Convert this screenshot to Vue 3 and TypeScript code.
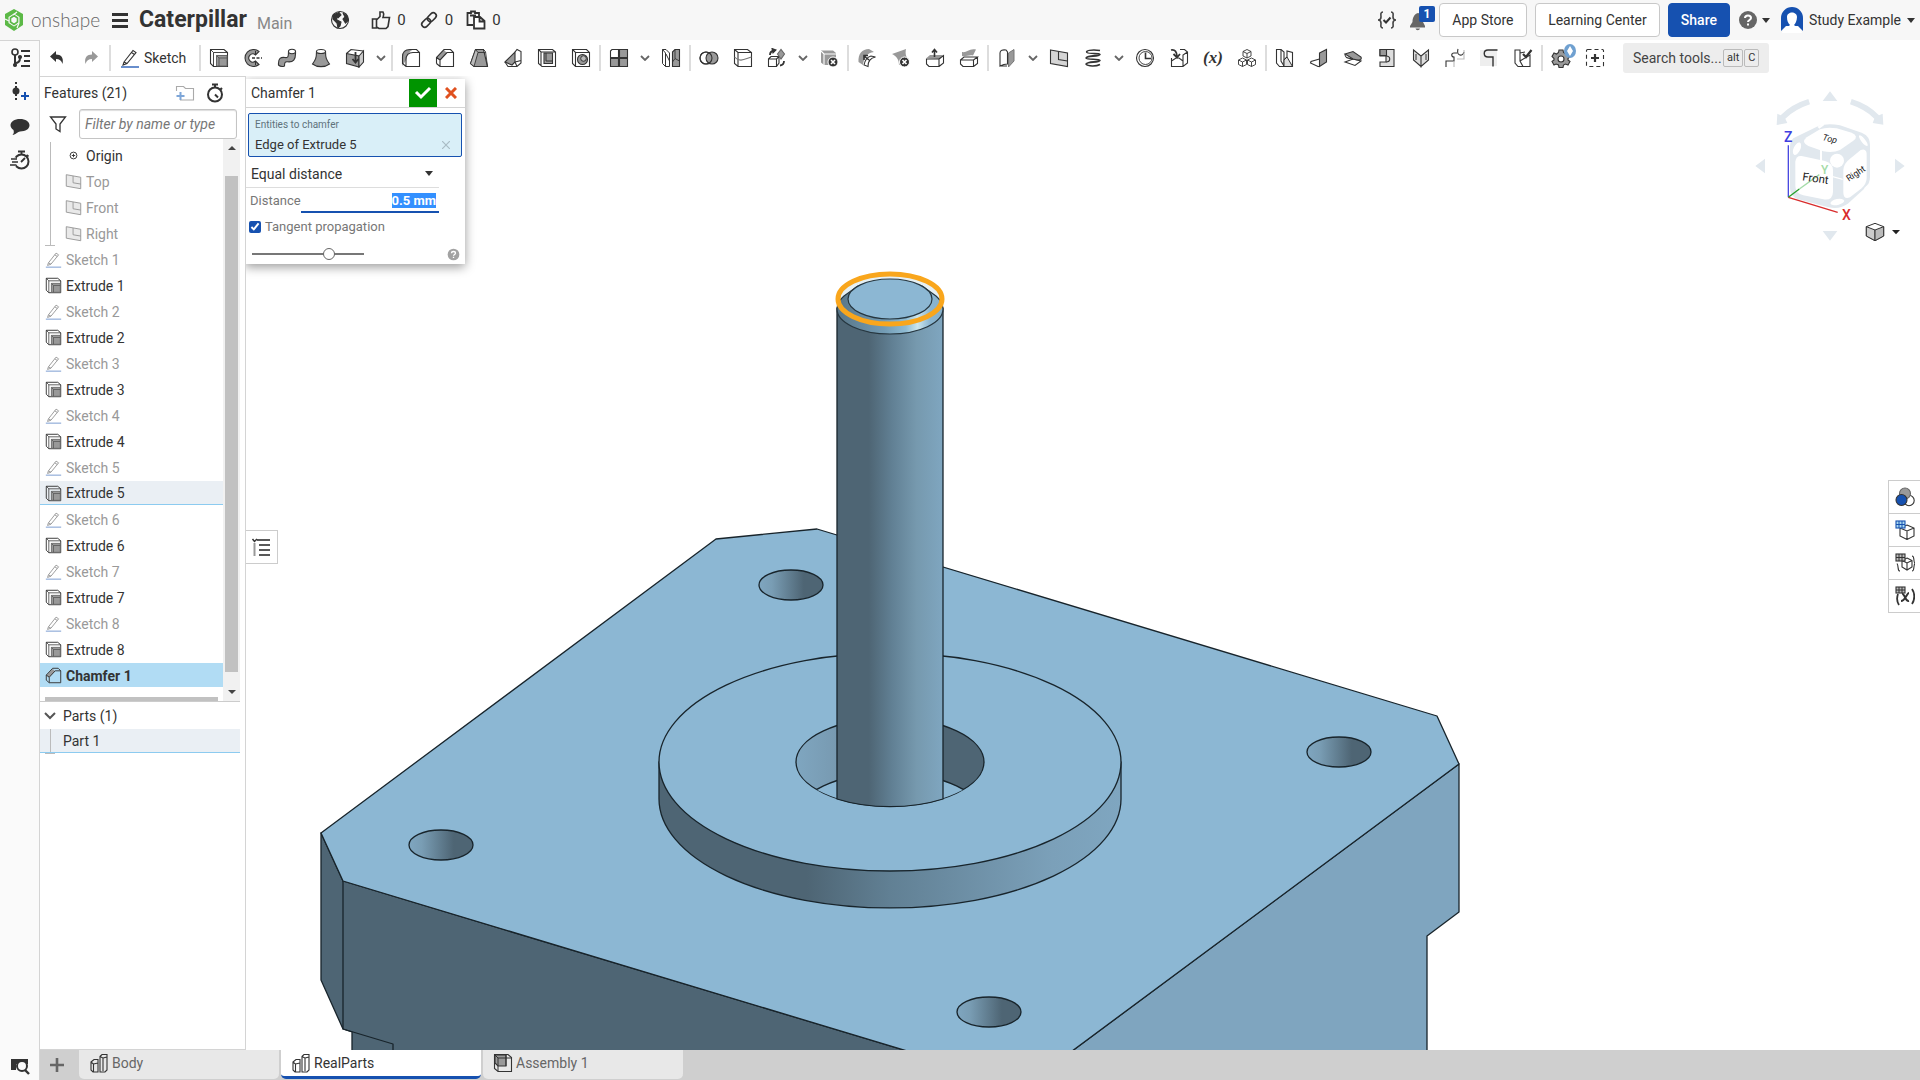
<script setup lang="ts">
import { onMounted, ref } from 'vue'

type ToolItem = { kind: 'icon' | 'chev' | 'sep'; name?: string }

const g = '#999'
const icons: Record<string, string> = {
  undo: '<path d="M3 8.500L9 3V6.500C14 6.500 17 9.500 15.500 16C14.500 12.500 12.500 11 9 11V14Z" fill="#333" stroke="none"/>',
  redo: '<path d="M17 8.500L11 3V6.500C6 6.500 3 9.500 4.500 16C5.500 12.500 7.500 11 11 11V14Z" fill="#999" stroke="none"/>',
  extrude: `<path d="M1.500 1.500H15L18.500 4.500V18.500H4.500L1.500 15.500Z"/><path d="M1.500 1.500L4.500 4.500H18.500M4.500 4.500V18.500" stroke-width=".9"/><path d="M7.500 7.500H18V18H7.500Z" fill="${g}" stroke="#666" stroke-width="1"/><path d="M7.500 7.500L10 10H18M10 10V18" stroke="#555" stroke-width=".9"/>`,
  revolve: `<path d="M16 3.500A8.500 8.500 0 1 0 16 16.500L12.500 13A4 4 0 1 1 12.500 7Z" fill="${g}"/><path d="M9 10H19" stroke-dasharray="3 1.500" stroke-width="1.300"/><path d="M12.500 3V7M12.500 13V17" stroke-width="1"/>`,
  sweep: `<path d="M1.500 17C1 10 4 9 8 9.500C11 10 11.500 9 11.500 3.500H18.500C19 12 16 14.500 10.500 13.800C8 13.500 7.500 14.500 7.500 18Q4 19.500 1.500 17Z" fill="${g}"/><ellipse cx="15" cy="3.500" rx="3.500" ry="2.200" fill="#fff"/>`,
  loft: `<path d="M5.500 3.500C5.500 10 4.500 12 1.500 16C6 19.500 14 19.500 18.500 16C15.500 12 14.500 10 14.500 3.500Z" fill="${g}"/><ellipse cx="10" cy="3.500" rx="4.500" ry="2" fill="#fff"/>`,
  thicken: `<path d="M1.500 5.500L14 8V19L1.500 15.500Z" fill="${g}"/><path d="M14 8L18.500 3V14L14 19Z" fill="#ccc"/><path d="M1.500 5.500L6 1.500L18.500 3"/><path d="M10.500 4V14M7.500 11L10.500 14.500L13.500 11" stroke-width="1.800"/>`,
  fillet: `<path d="M1.500 18V10C1.500 5 4 1.500 9 1.500H12.500C8 3.500 5 7 5 12Z" fill="${g}" stroke="none"/><path d="M1.500 16V9Q1.500 1.500 9 1.500H15.500L18.500 4.500V18.500H5L1.500 15.500M18.500 4.500H12Q5 4.500 5 12V18.500"/>`,
  chamfer: `<path d="M1.500 10L9 2L12 5L5 12Z" fill="${g}" stroke="none"/><path d="M1.500 15.500V9.500L9 1.500H15.500L18.500 4.500V18.500H5L1.500 15.500M18.500 4.500H12L5 12V18.500M1.500 9.500L5 12"/>`,
  draft: `<path d="M6.500 1.500H14.500L18.500 18.500H5L1.500 15.500Z" fill="${g}"/><path d="M6.500 1.500L9 4.500L5 18.500L1.500 15.500Z" fill="#bbb" stroke-width=".9"/><path d="M14.500 1.500L16.500 3.500L18.500 18.500M9 4.500H16.500" stroke-width=".9"/>`,
  rib: `<path d="M2 14L12 4V14L9 17Z" fill="${g}"/><path d="M12 4L14 1.500L18 3.500V15L14 18.500H5L2 14M12 14L18 12.500M14 18.500L12 14"/>`,
  shell: `<path d="M1.500 1.500H15.500L18.500 4V18.500H5L1.500 15.500ZM1.500 1.500L4 4H18.500M4 4V17"/><path d="M7 5H15.500V15.500H7Z" fill="${g}"/><path d="M9 5V13H15.500" stroke-width="1"/>`,
  hole: `<path d="M1.500 1.500H15.500L18.500 4.500V18.500H4.500L1.500 15.500ZM1.500 1.500L4.500 4.500H18.500M4.500 4.500V18.500"/><circle cx="11.500" cy="11.500" r="5" fill="${g}"/><circle cx="12.500" cy="10.500" r="2.800" fill="#bbb" stroke-width="1"/>`,
  pattern: `<path d="M1.500 3L3 1.500H9.500V9.500H1.500Z" fill="#fff"/><path d="M10.500 1.500H18.500V9.500H10.500ZM1.500 10.500H9.500V18.500H1.500ZM10.500 10.500H18.500V18.500H10.500Z" fill="${g}"/>`,
  mirror: `<path d="M1.500 1.500H5L8.500 5V18.500H4.500L1.500 15.500ZM1.500 1.500L4.500 5V18.500M8.500 13L5 6" stroke-width="1"/><path d="M11.500 4L14 1.500H18.500V18.500H11.500Z" fill="${g}"/><path d="M11.500 14L14 10.500V1.500M14 10.500L18.500 13" stroke-width=".9"/>`,
  boolean: `<circle cx="7" cy="10" r="6"/><circle cx="13" cy="10" r="6" fill="${g}"/><circle cx="7" cy="10" r="6"/>`,
  split: '<path d="M1.500 1.500H14.500L18.500 4.500V18.500H5L1.500 15.500ZM1.500 1.500L5 4.500H18.500M5 4.500V18.500"/><path d="M1.500 9C7 15 12 11 18.500 9" stroke="#777"/>',
  transform: `<path d="M1.500 11H9.500V18.500H1.500ZM1.500 11L4 8.500H12L9.500 11M12 8.500V15L9.500 18.500"/><path d="M10.500 6L14 1.500L17.500 6L14 11Z" fill="${g}" stroke="#666"/><path d="M3 7C3 4 4 3 7 2.500M13 17.500C16 17 17 16 17 13" stroke-width="1.800"/><path d="M5 0.500L9 2L6 5Z" fill="#333"/>`,
  deletepart: `<path d="M2 2.500H14L17 5V17H5L2 14.500Z" fill="${g}" stroke="none"/><path d="M2 3L5 6H17M5 6V17" stroke="#fff"/><circle cx="14" cy="14" r="5" fill="#333" stroke="#fff" stroke-width="1"/><path d="M12 12L16 16M16 12L12 16" stroke="#fff" stroke-width="1.600"/>`,
  movefaceA: `<path d="M1.500 14C1 6 5 1 12 1L17 4C10 5 7 9 6 17Z" fill="${g}" stroke="none"/><path d="M11 18.500C11 14 13 10 18.500 9L14 8C10 9 8 12 7 17Z" fill="#fff"/><path d="M12 12L7 8M7 12V7.500H11" stroke-width="1.600"/>`,
  deleteface: `<path d="M1 6L15 1C14 6 15 9 18 13L8 17C8 11 5 8 1 6Z" fill="${g}" stroke="none"/><circle cx="13.500" cy="14" r="5" fill="#333" stroke="#fff" stroke-width="1"/><path d="M11.500 12L15.500 16M15.500 12L11.500 16" stroke="#fff" stroke-width="1.600"/>`,
  moveface: `<path d="M1.500 10L5 7H18L15 11Z" fill="${g}" stroke="none"/><path d="M1.500 11H14V18.500H4L1.500 16ZM14 11L18.500 7.500V15L14 18.500"/><path d="M9.500 9V2M7 4.500L9.500 1.500L12 4.500" stroke-width="1.600"/>`,
  replaceface: `<path d="M3 4C8 5 10 0 17 1.500L14 7.500C10 6.500 7 9 3 8Z" fill="${g}" stroke="none"/><path d="M1.500 12H14.500V18.500H4L1.500 16ZM1.500 12L5 9H18.500L14.500 12M18.500 9V15.500L14.500 18.500"/>`,
  surface: `<path d="M3 18V5C3 2 6 1.500 9 2L10.500 4V16C7 16 5 17 3 18ZM3 18H10"/><path d="M11.500 5L17 1.500V13L11.500 19Z" fill="${g}" stroke="#777" stroke-width="1"/>`,
  plane: '<path d="M1.500 2L18.500 5V18.500L1.500 15.500Z" fill="#d5d5d5"/><path d="M9.500 3.500V11.500L18.500 13"/>',
  helix: '<path d="M17 2.500C8 1 2 3 4 4.500C7 6.500 16 4.500 17 6.500C16 9 4 7.500 3 10C4 12.500 16 10 17 12.500C16 15 4 13.500 3 16C5 18.500 13 18.500 17 16.500M3 10C5 7 15 8 17 6.500M3 16C5 13 15 14.500 17 12.500" stroke-width="1.500"/>',
  clock: '<circle cx="10" cy="10" r="8.500"/><circle cx="10.500" cy="10" r="6.500" stroke-width=".9"/><path d="M10.500 4.500V10.500H16" stroke-width="1.600"/>',
  importp: '<path d="M2.500 10V18.500H14L18.500 15V4L15.500 1.500H11M14 18.500V7L18.500 4M2.500 13L7 10H10L14 13"/><path d="M2 2C6 1 8 4 8 9M4.500 6L8 9.500L11 6" stroke-width="1.800"/>',
  cubes: '<path d="M10 1.500L14 3.500V8L10 10L6 8V3.500ZM6 3.500L10 5.500L14 3.500M10 5.500V10M5.500 10L9.500 12V16.500L5.500 18.500L1.500 16.500V12ZM1.500 12L5.500 14L9.500 12M5.500 14V18.500M14.500 10L18.500 12V16.500L14.500 18.500L10.500 16.500V12ZM10.500 12L14.500 14L18.500 12M14.500 14V18.500" stroke-width=".9"/>',
  sm1: `<path d="M1.500 1.500H6L9 4V18.500H4.500L1.500 15Z"/><path d="M6 1.500V13L9 18M9 12L12 9V3L17.500 4.500V18.500H9"/><path d="M12 9L17.500 18.500L9 18.500V12Z" fill="#ddd" stroke-width="1"/>`,
  sm2: `<path d="M10.500 5L17.500 1.500V14L10.500 18.500Z" fill="${g}"/><path d="M10.500 11L2 13.500L1.500 15L9 18.500H10.500"/>`,
  sm3: `<path d="M2 14L10 11L18 13L12 17.500Z" fill="#fff"/><path d="M2 6L10 3.500L18 9C19 12 17 13 10 11Z" fill="${g}"/><path d="M2 6C2 10 4 10 10 11"/>`,
  sm4: `<path d="M3 1.500H17V18.500H3V14H9V8H3Z" fill="#ddd"/><path d="M3 1.500H9.500V7.500H3Z" fill="${g}"/><path d="M9 8C14 8 14 14 9 14" />`,
  sm5: '<path d="M2.500 2L10 8V18.500L2.500 12ZM17.500 2L10 8V18.500L17.500 12Z" fill="#ddd"/><path d="M5 6V12M15 6V12" stroke-width="1"/>',
  sm6: '<path d="M2 18V11H7V8M7 11V18H2M8 8H12C18 9 18 3 13 3" stroke="none"/><path d="M1 19V13H9V9C6 9 6 5 9 5H12M13 1C11 8 18 9 19 4"/><path d="M9 13V19M12 11H19V2" stroke="#bbb"/>',
  sm7: '<path d="M1 18V2H18V18Z" fill="#eee" stroke="none"/><path d="M18.500 2H9C4 2 4 9 9 9H14V18.500" stroke-width="1.400"/>',
  sm8: '<path d="M2 2H7V13L10 18.500H5L2 15ZM7 13L17 7V18.500H5M7 5L12 4" /><path d="M10 6L13 9L18.500 2" stroke-width="2.200"/>',
  gear: `<path d="M8 2H12L12.500 4.500L15 6L17 5L19 8.500L17 10.500V12L19 13.500L17 17L14.500 16L12.500 17L12 19.500H8L7.500 17L5 16L3 17L1 13.500L3 12V10.500L1 8.500L3 5L5.500 6L7.500 4.500Z" fill="${g}"/><circle cx="10" cy="11" r="3" fill="#fff"/>`,
  addtool: '<rect x="1.500" y="1.500" width="17" height="17" rx="1" stroke-dasharray="4 3"/><path d="M10 6V14M6 10H14" stroke-width="2.200"/>',
  pencil: '<path d="M4 14L13 2.500L16 4.500L7 15.500L3 17ZM11.500 4.500L14.500 6.500M4 14L7 15.500"/><path d="M1 19H19" stroke="#1651b0" stroke-width="1.300"/>',
  origin: '<circle cx="10" cy="10" r="4"/><path d="M8 10H12M10 8V12"/>',
  partstudio: '<path d="M2 9L5 6.500H9V19H4L2 17ZM2 9L4.500 11V19M4.500 11L9 10M11 3.500L13 1.500H18V17L16 19H11ZM11 3.500L14 5V18M14 5L18 4"/>',
  assembly: `<path d="M1.500 1.500H15L18.500 4.500V18.500H5L1.500 15.500Z"/><path d="M2 2H13V13H5L2 10Z" fill="${g}"/><path d="M2 2L5 5H18M5 5V18M13 2V13" stroke-width="1"/>`,
  tree: '<circle cx="5" cy="4" r="3" stroke-width="1.600"/><path d="M5 7V18M5 15C9 15 10 13 10 10" stroke-width="2"/><path d="M11 3H20M14 8H20M14 13H20M11 18H20" stroke-width="2"/><circle cx="5" cy="17" r="1.500" fill="#333"/><circle cx="10" cy="9" r="1.500" fill="#333"/>',
  insert: '<path d="M6 0V19" stroke-width="2" stroke-dasharray="2 2"/><circle cx="6" cy="9" r="3.500" fill="#333" stroke="none"/><path d="M15 10V18M11 14H19" stroke="#1651b0" stroke-width="2"/>',
  comment: '<path d="M10 3C15.500 3 19.500 5.500 19.500 9.300S15.500 15.500 10 15.500C8 15.500 6 18.500 2.500 19C4 17.500 4 16 3.500 14C1.500 13 .5 11 .5 9.300C.5 5.500 4.500 3 10 3Z" fill="#333" stroke="none"/>',
  history: '<circle cx="11.500" cy="11.500" r="7" stroke-width="2"/><path d="M11.500 4V1.500M8 1.500H15M11 12L15 8M16.500 5L18.500 6.500" stroke-width="1.800"/><path d="M0 9H6M1 12H8M0 15H6" stroke="#fafafa" stroke-width="3"/><path d="M1 9H7M2 12H8M0 15H6" stroke-width="1.300"/>',
  stopwatch: '<circle cx="10" cy="11.500" r="7" stroke-width="2"/><path d="M10 4V2M7 1.500H13M10 11.500L13 14.500M15.500 5L17 6.500" stroke-width="2"/>',
  folder: '<path d="M5 17H18.500V5.500H10.500L8.500 3.500H1.500V8" stroke="#aaa"/><path d="M5.500 9V17M1.500 13H9.500" stroke="#7ea6d8" stroke-width="2"/>',
  funnel: '<path d="M2.500 3H17.500L12 10V17.500L8 15V10Z" stroke-width="1.300"/>',
  tabsearch: '<path d="M1 4H18V9H6V15H1Z" fill="#333" stroke="none"/><circle cx="12" cy="11" r="5" fill="#fafafa" stroke-width="2"/><path d="M15 15L19 19" stroke-width="2.400"/>',
  globe: '<circle cx="10" cy="10" r="8.500"/><path d="M3 5L9 2.500L11 5L8 8L6 7.500L7 10L11 12L10 16L8 18L7 13L3 9ZM13 3L17 6L18.500 10L15.500 13L13 9L15 7Z" fill="#333"/>',
  like: '<path d="M1.500 9H5.500V18H1.500ZM5.500 10L9 6.500V2H12C13.500 4 12.500 6 12 7.500H18.500L17 16.500L15 18.500H8L5.500 17" stroke-width="1.600"/>',
  link: '<g transform="rotate(-45 10 10)" stroke-width="1.600"><rect x="1" y="7" width="10" height="6" rx="3"/><rect x="9" y="7" width="10" height="6" rx="3"/></g>',
  copy: '<path d="M7 15H1.500V3H5V1.500H9V3H13V6M4 5.500H10" stroke-width="1.800"/><path d="M8 7H14L18.500 11V18.500H8ZM13.500 7V11.500H18.500" fill="#fff" stroke-width="1.800"/>',
  braces: '<path d="M6 2C3 2 4 5 4 7S3 10 1 10C3 10 4 11 4 13S3 18 6 18M14 2C17 2 16 5 16 7S17 10 19 10C17 10 16 11 16 13S17 18 14 18" stroke="#444" stroke-width="1.600"/><path d="M6.500 10L9 12.500L13.500 7.500" stroke-width="2"/>',
  bell: '<path d="M9 2C13 3 14 7 14 11L16 15V16.500H1V15L3.500 11C3.500 7 5 3 9 2ZM6.500 17.500H11A2.300 2.300 0 0 1 6.500 17.500Z" fill="#666" stroke="none"/>',
  help: '<circle cx="10" cy="10" r="9" fill="#666" stroke="none"/><path d="M7 8C7 4.500 13 4.500 13 8C13 10 10 10 10 12M10 13.500V15.500" stroke="#fff" stroke-width="2"/>',
  list: '<path d="M6 3H19M8 8H19M8 13H19M8 18H19" stroke="#222" stroke-width="1.300"/><path d="M3.500 6V19" stroke="#999" stroke-width="2"/><path d="M1.500 2L3.500 4.500L6 2" stroke-width="1.500"/>',
  appearance: `<circle cx="14" cy="13.500" r="5.200" fill="#fff"/><circle cx="10" cy="6.500" r="5.500" fill="${g}" stroke="#666"/><circle cx="6.500" cy="13" r="5.500" fill="#1651b0"/>`,
  bomcube: '<path d="M12 5L19 8V16L12 19.500L5 16V8ZM5 8L12 11L19 8M12 11V19"/><rect x="1" y="1" width="9" height="7" fill="#a9d8f0" stroke="#1651b0"/><path d="M4 1V8M7 1V8M1 4.500H10" stroke="#1651b0" stroke-width="1"/>',
  configcube: '<path d="M12 5L17 7.500V14L12 17L7 14V7.500ZM7 7.500L12 10L17 7.500M12 10V17M17 3C20 3 18 9 20 10.500C18 12 20 18 17 18M5 18C2 18 4 13 2 10.500"/><rect x="1" y="1" width="9" height="7" fill="#bbb"/><path d="M4 1V8M7 1V8M1 4.500H10" stroke-width="1"/>',
  vartable: '<path d="M3 8C1.500 12 1.500 15 4 19M17 3C20 7 20 14 17 18" stroke-width="1.800"/><path d="M7 8C10 7 10 16 14 15M14 7C12 7 10 15 6 15" stroke-width="2"/><rect x="1" y="1" width="9" height="6" fill="#bbb"/><path d="M4 1V7M7 1V7M1 4H10" stroke-width="1"/>',
}

const parse = (list: string): ToolItem[] =>
  list.split(' ').map((n) => (n === '|' ? { kind: 'sep' } : n === 'v' ? { kind: 'chev' } : { kind: 'icon', name: n }))

const tools = parse(
  '| extrude revolve sweep loft thicken v | fillet chamfer draft rib shell hole | pattern v mirror | boolean split transform v deletepart | movefaceA deleteface moveface replaceface | surface v plane helix v clock importp variable cubes | sm1 sm2 sm3 sm4 sm5 sm6 sm7 sm8 | gear addtool',
)

const features: { label: string; icon: string; cls: string }[] = [
  { label: 'Origin', icon: 'origin', cls: 'child' },
  { label: 'Top', icon: 'plane', cls: 'child dim' },
  { label: 'Front', icon: 'plane', cls: 'child dim' },
  { label: 'Right', icon: 'plane', cls: 'child dim' },
]
for (let i = 1; i <= 8; i++) {
  features.push({ label: `Sketch ${i}`, icon: 'pencil', cls: 'dim' })
  features.push({ label: `Extrude ${i}`, icon: 'extrude', cls: i === 5 ? 'linked' : '' })
}
features.push({ label: 'Chamfer 1', icon: 'chamfer', cls: 'active' })

const tabs = [
  { label: 'Body', icon: 'partstudio', on: false },
  { label: 'RealParts', icon: 'partstudio', on: true },
  { label: 'Assembly 1', icon: 'assembly', on: false },
]
const holes = [[791, 585], [1339, 752], [441, 845], [989, 1012]]
const sidePanels = ['appearance', 'bomcube', 'configcube', 'vartable']

const distance = ref('0.5 mm')
const mode = ref('Equal distance')
const tangent = ref(true)
const preview = ref(71)
const distanceBox = ref<HTMLInputElement | null>(null)
onMounted(() => {
  distanceBox.value?.focus()
  distanceBox.value?.select()
})
</script>

<template>
  <div class="app">
    <header class="top">
      <a class="brand" href="#" aria-label="onshape">
        <svg width="20" height="24" viewBox="0 0 20 24">
          <path d="M10 1L19 6V17L10 23L1 17V6Z" fill="#5cb947" />
          <path d="M10 5.500L15.500 9V15L10 18.500L4.500 15V9Z" fill="#f7f7f7" />
          <path d="M10 7.500L13.500 10V14L10 16.500L6.500 14V10Z" fill="none" stroke="#5cb947" stroke-width="1.600" />
          <path d="M1 11L5 13M13 4L9 7M13 20L15 15" stroke="#f7f7f7" stroke-width="1.300" />
          <circle cx="10" cy="12" r="2" fill="#f7f7f7" />
        </svg>
        <span>onshape</span>
      </a>
      <button class="burger" aria-label="Menu"><i></i><i></i><i></i></button>
      <h1>Caterpillar</h1>
      <span class="branch">Main</span>
      <div class="stats">
        <svg class="ic" viewBox="0 0 20 20" v-html="icons.globe"></svg>
        <button v-for="s in ['like', 'link', 'copy']" :key="s" class="stat" :aria-label="s">
          <svg class="ic" viewBox="0 0 20 20" v-html="icons[s]"></svg><span>0</span>
        </button>
      </div>
      <div class="account">
        <button class="plain" aria-label="Custom features"><svg class="ic" viewBox="0 0 20 20" v-html="icons.braces"></svg></button>
        <button class="plain bell" aria-label="Notifications"><svg class="ic" viewBox="0 0 20 20" v-html="icons.bell"></svg><b>1</b></button>
        <button class="btn store">App Store</button>
        <button class="btn learn">Learning Center</button>
        <button class="btn share">Share</button>
        <button class="plain help" aria-label="Help"><svg class="ic" viewBox="0 0 20 20" v-html="icons.help"></svg><i class="caret"></i></button>
        <button class="plain user">
          <svg width="24" height="28" viewBox="0 0 24 28"><path d="M1 25V12A11 11 0 0 1 23 12V25L18 20H6Z" fill="#1651b0" /><path d="M7 11C7 5 17 5 17 11C17 15 15 18 14 19C16 21 21 21 22 27H2C3 21 8 21 10 19C8 17 7 15 7 11Z" fill="#fff" /></svg>
          <span>Study Example</span><i class="caret"></i>
        </button>
      </div>
    </header>

    <div class="body">
      <nav class="rail">
        <button v-for="n in ['tree', 'insert', 'comment', 'history']" :key="n" :aria-label="n"><svg class="ic" viewBox="0 0 20 20" v-html="icons[n]"></svg></button>
        <button class="last" aria-label="Tab manager"><svg class="ic" viewBox="0 0 20 20" v-html="icons.tabsearch"></svg></button>
      </nav>

      <div class="work">
        <div class="toolbar">
          <button class="tool" aria-label="Undo"><svg class="ic" viewBox="0 0 20 20" v-html="icons.undo"></svg></button>
          <button class="tool" aria-label="Redo"><svg class="ic" viewBox="0 0 20 20" v-html="icons.redo"></svg></button>
          <i class="sep"></i>
          <button class="sketch"><svg class="ic" viewBox="0 0 20 20" v-html="icons.pencil"></svg><span>Sketch</span></button>
          <template v-for="(t, i) in tools" :key="i">
            <i v-if="t.kind === 'sep'" class="sep"></i>
            <button v-else-if="t.kind === 'chev'" class="chev" aria-label="More"><svg width="10" height="6" viewBox="0 0 10 6"><path d="M1 1L5 5L9 1" fill="none" stroke="#666" stroke-width="1.800" /></svg></button>
            <button v-else class="tool" :aria-label="t.name">
              <span v-if="t.name === 'variable'" class="var">(<em>x</em>)</span>
              <svg v-else class="ic" viewBox="0 0 20 20" v-html="icons[t.name!]"></svg>
              <svg v-if="t.name === 'gear'" class="gearbadge" width="12" height="18" viewBox="0 0 12 18"><ellipse cx="6" cy="8" rx="6" ry="7" fill="#6fa0d0" /><path d="M6 3L9 8L6 13L3 8Z" fill="#fff" /></svg>
            </button>
          </template>
          <label class="search"><input type="text" placeholder="Search tools..." aria-label="Search tools" /><kbd>alt</kbd><kbd>C</kbd></label>
        </div>

        <main class="main">
          <aside class="panel">
            <div class="phead">
              <h2>Features (21)</h2>
              <button class="plain" aria-label="New folder"><svg class="ic" viewBox="0 0 20 20" v-html="icons.folder"></svg></button>
              <button class="plain" aria-label="Regeneration time"><svg class="ic" viewBox="0 0 20 20" v-html="icons.stopwatch"></svg></button>
            </div>
            <div class="filter">
              <svg class="ic" viewBox="0 0 20 20" v-html="icons.funnel"></svg>
              <input type="text" placeholder="Filter by name or type" aria-label="Filter by name or type" />
            </div>
            <div class="scroller">
              <div class="listwrap">
                <ul class="list">
                  <li v-for="f in features" :key="f.label" :class="f.cls">
                    <svg class="ic" viewBox="0 0 20 20" v-html="icons[f.icon]"></svg><span>{{ f.label }}</span>
                  </li>
                </ul>
                <div class="hbar"></div>
              </div>
              <div class="vbar"><i class="up"></i><div class="thumb"></div><i class="down"></i></div>
            </div>
            <div class="parts">
              <h3><svg width="12" height="8" viewBox="0 0 12 8"><path d="M1 1L6 6L11 1" fill="none" stroke="#555" stroke-width="2" /></svg>Parts (1)</h3>
              <div class="part">Part 1</div>
            </div>
          </aside>

          <section class="view">
            <svg class="scene" viewBox="246 76 1674 974" preserveAspectRatio="xMinYMin slice" stroke-linejoin="round">
              <defs>
                <linearGradient id="shaft"><stop offset="0" stop-color="#4e6574" /><stop offset=".3" stop-color="#4e6574" /><stop offset=".52" stop-color="#618094" /><stop offset=".75" stop-color="#7699ae" /><stop offset="1" stop-color="#7fa6c0" /></linearGradient>
                <linearGradient id="boss"><stop offset="0" stop-color="#4e6574" /><stop offset=".32" stop-color="#4e6574" /><stop offset=".5" stop-color="#618094" /><stop offset=".85" stop-color="#7ba0b9" /><stop offset="1" stop-color="#7fa6c0" /></linearGradient>
                <linearGradient id="hole"><stop offset="0" stop-color="#7fa6c0" /><stop offset=".2" stop-color="#799db4" /><stop offset=".7" stop-color="#4e6574" /><stop offset="1" stop-color="#4e6574" /></linearGradient>
                <linearGradient id="cone"><stop offset="0" stop-color="#587587" /><stop offset=".45" stop-color="#739cb5" /><stop offset=".65" stop-color="#8fbcd4" /><stop offset=".76" stop-color="#cce6ee" /><stop offset=".88" stop-color="#8ab5d0" /><stop offset="1" stop-color="#86b0cb" /></linearGradient>
                <linearGradient id="bore"><stop offset="0" stop-color="#7fa6c0" /><stop offset=".23" stop-color="#7799b0" /><stop offset=".6" stop-color="#4e6574" /><stop offset="1" stop-color="#4e6574" /></linearGradient>
                <clipPath id="boreClip"><ellipse cx="890" cy="762" rx="94" ry="44" /></clipPath>
              </defs>
              <g stroke="#18242b" stroke-width="1.300">
                <path d="M321 833L343 881L957 1066V1090H352V1032L343 1029L321 980Z" fill="#4e6574" />
                <path d="M343 881V1029L393 1044V1060" fill="none" />
                <path d="M1459 764V912L1427 936V1090H1000L1060 1060Z" fill="#7fa5bf" />
                <path d="M716 539L817 529L1437 716L1459 764L1060 1060L957 1066L343 881L321 833Z" fill="#8cb7d3" />
                <ellipse v-for="h in holes" :key="h[0]" :cx="h[0]" :cy="h[1]" rx="32" ry="15" fill="url(#hole)" />
                <path d="M659 762V799A231 109 0 0 0 1121 799V762Z" fill="url(#boss)" />
                <ellipse cx="890" cy="762" rx="231" ry="109" fill="#8cb7d3" />
                <ellipse cx="890" cy="762" rx="94" ry="44" fill="url(#bore)" />
                <ellipse cx="890" cy="817" rx="94" ry="44" fill="#8cb7d3" clip-path="url(#boreClip)" />
                <path d="M837 308V799A94 44 0 0 0 943 799V308Z" fill="url(#shaft)" />
              </g>
              <ellipse cx="890" cy="300" rx="52" ry="25" fill="#e6f0f4" />
              <path d="M837 309A53 25 0 0 0 943 309Q943 302 936 296L922 286H858L844 296Q837 302 837 309Z" fill="url(#cone)" stroke="#26363f" stroke-width="1.200" />
              <ellipse cx="890" cy="299" rx="42" ry="20" fill="#8cb7d3" stroke="#26363f" stroke-width="1.200" />
              <ellipse cx="890" cy="299" rx="52" ry="25" fill="none" stroke="#f9a61c" stroke-width="5" />
            </svg>

            <form class="dialog" @submit.prevent>
              <div class="dhead">
                <span>Chamfer 1</span>
                <button class="ok" aria-label="Accept"><svg width="18" height="14" viewBox="0 0 18 14"><path d="M2 6L7 11L16 2" fill="none" stroke="#fff" stroke-width="3" /></svg></button>
                <button type="button" class="no" aria-label="Cancel"><svg width="12" height="12" viewBox="0 0 12 12"><path d="M1 1L11 11M11 1L1 11" stroke="#e0511f" stroke-width="3" /></svg></button>
              </div>
              <div class="entities">
                <small>Entities to chamfer</small>
                <div><span>Edge of Extrude 5</span><button type="button" class="plain" aria-label="Remove"><svg width="8" height="8" viewBox="0 0 8 8"><path d="M0 0L8 8M8 0L0 8" stroke="#a9bcc5" stroke-width="1.200" /></svg></button></div>
              </div>
              <div class="mode"><select v-model="mode" aria-label="Chamfer type"><option>Equal distance</option></select><i class="caret"></i></div>
              <div class="dist"><label for="distance">Distance</label><input id="distance" ref="distanceBox" v-model="distance" type="text" /></div>
              <label class="tangent"><input v-model="tangent" type="checkbox" /><span>Tangent propagation</span></label>
              <div class="dfoot"><input v-model="preview" type="range" min="0" max="100" aria-label="Preview opacity" /><svg class="ic" viewBox="0 0 20 20" v-html="icons.help"></svg></div>
            </form>

            <button class="flyout" aria-label="Toggle list"><svg class="ic" viewBox="0 0 20 20" v-html="icons.list"></svg></button>

            <div class="cube">
              <svg width="180" height="170" viewBox="0 0 540 510">
                <g fill="#e1e8ee">
                  <path d="M248 63L270 34L292 63ZM248 453L270 482L292 453ZM75 236L46 258L75 280ZM465 236L494 258L465 280Z" />
                  <path d="M205 57L210 73Q165 88 136 116L142 129L110 135L112 101L122 106Q155 72 205 57ZM335 57L330 73Q375 88 403 116L398 129L430 134L428 101L417 106Q385 72 335 57Z" />
                  <path d="M160 175L235 138Q265 128 300 136L365 158Q390 168 390 195V290Q390 310 376 323L325 370Q300 390 265 382L175 358Q150 350 150 325V200Q150 185 160 175Z" />
                </g>
                <g fill="#fff">
                  <path d="M200 172L240 148Q260 140 290 145L335 158Q358 168 340 182L300 210Q280 219 250 214L205 198Q182 187 200 172Z" />
                  <path d="M185 228L255 243Q279 250 279 270V335Q278 363 250 358L190 346Q166 340 166 318V245Q168 226 185 228Z" />
                  <path d="M330 236L362 210Q382 203 380 228V295Q379 312 365 325L330 352Q311 360 310 338V270Q311 250 330 236Z" />
                  <circle cx="291" cy="242" r="21" /><ellipse cx="171" cy="206" rx="10" ry="20" transform="rotate(25 171 206)" /><ellipse cx="292" cy="366" rx="21" ry="9" transform="rotate(-12 292 366)" /><ellipse cx="370" cy="182" rx="6" ry="20" transform="rotate(-38 370 182)" />
                  <path d="M240 208H246V245H240ZM278 288L308 296V300L278 292ZM232 140L252 130V136L238 146ZM372 325L385 312V320L378 330Z" />
                </g>
                <path d="M145 352V196" stroke="#4a4ae0" stroke-width="4" /><path d="M145 352L293 397" stroke="#d82c2c" stroke-width="4" /><path d="M145 352L178 327" stroke="#28a02c" stroke-width="4" /><path d="M178 327L238 284" stroke="#a4dba8" stroke-width="4" />
                <g fill="#222">
                  <text x="186" y="301" font-size="34" transform="rotate(8 186 301)">Front</text>
                  <text x="326" y="305" font-size="27" transform="rotate(-33 326 305)">Right</text>
                  <text x="246" y="180" font-size="27" font-style="italic" transform="rotate(14 246 180)">Top</text>
                </g>
                <g font-size="42" font-weight="500"><text x="132" y="186" fill="#3f3fe0">Z</text><text x="306" y="419" fill="#d82c2c">X</text><text x="243" y="282" fill="#a4dba8" font-size="36">Y</text></g>
                <g stroke="#333" stroke-width="3" stroke-linejoin="round"><path d="M405 430L431 440V468L405 482L379 468V440Z" fill="#fff" /><path d="M379 440L405 450V482L379 468Z" fill="#ccc" /><path d="M405 450L431 440V468L405 482Z" fill="#bbb" /></g>
                <path d="M456 450H480L468 463Z" fill="#222" />
              </svg>
            </div>

            <div class="side">
              <button v-for="p in sidePanels" :key="p" :aria-label="p"><svg class="ic" viewBox="0 0 20 20" v-html="icons[p]"></svg></button>
            </div>
          </section>
        </main>

        <footer class="tabs">
          <button class="plus" aria-label="New tab"><svg width="14" height="14" viewBox="0 0 14 14"><path d="M7 0V14M0 7H14" stroke="#666" stroke-width="2.600" /></svg></button>
          <button v-for="t in tabs" :key="t.label" class="tab" :class="{ on: t.on }"><svg class="ic" viewBox="0 0 20 20" v-html="icons[t.icon]"></svg><span>{{ t.label }}</span></button>
        </footer>
      </div>
    </div>
  </div>
</template>

<style>
html, body, #app { height: 100%; }
body { margin: 0; overflow: hidden; }
</style>

<style scoped>
.app { height: 100vh; display: flex; flex-direction: column; background: #fff; color: #333; font: 14px/20px Roboto, "Liberation Sans", sans-serif; }
.app *, .app *::before, .app *::after { box-sizing: border-box; }
button, input, select { font: inherit; color: inherit; margin: 0; padding: 0; border: 0; background: none; outline: none; }
h1, h2, h3, ul { margin: 0; padding: 0; list-style: none; font-weight: 400; }
svg { display: block; flex: none; }
.ic { width: 20px; height: 20px; fill: none; stroke: #333; stroke-width: 1.1; }
.caret { width: 0; height: 0; flex: none; border: 4px solid transparent; border-top: 5px solid #333; border-bottom: 0; }
.plain { display: flex; align-items: center; }

.top { height: 40px; flex: none; display: flex; align-items: center; background: #f7f7f7; white-space: nowrap; }
.brand { display: flex; align-items: center; gap: 7px; width: 112px; padding-left: 4px; text-decoration: none; color: #666; font: 300 19px/24px Lato, sans-serif; }
.burger { width: 16px; margin-right: 11px; display: flex; flex-direction: column; gap: 3px; }
.burger i { height: 3px; background: #333; }
h1 { font-size: 23px; line-height: 40px; font-weight: 700; }
.branch { margin-left: 10px; padding-top: 8px; font-size: 16px; color: #888; }
.stats { display: flex; align-items: center; margin-left: 38px; font-size: 15px; }
.stat { display: flex; align-items: center; gap: 6px; margin-left: 13px; }
.stat:nth-child(2) { margin-left: 21px; }
.account { margin-left: auto; display: flex; align-items: center; padding-right: 5px; }
.bell { position: relative; margin: 0 10px 0 12px; width: 20px; height: 32px; padding-top: 2px; }
.bell b { position: absolute; left: 10px; top: 2px; width: 16px; height: 16px; border-radius: 2px; background: #1651b0; color: #fff; font-size: 12px; line-height: 16px; text-align: center; }
.btn { height: 34px; margin-right: 8px; border: 1px solid #c8c8c8; border-radius: 4px; background: #fff; text-align: center; }
.store { width: 88px; }
.learn { width: 125px; }
.share { width: 62px; border-color: #1651b0; background: #1651b0; color: #fff; font-weight: 500; }
.help { gap: 4px; margin-right: 10px; }
.user > span { margin: 0 6px 0 5px; }

.body { flex: 1; min-height: 0; display: flex; }
.rail { width: 40px; flex: none; display: flex; flex-direction: column; background: #fafafa; border: solid #d4d4d4; border-width: 1px 1px 0 0; }
.rail button { height: 34px; display: flex; align-items: center; justify-content: center; }
.rail .last { margin-top: auto; height: 30px; }
.work { flex: 1; min-width: 0; display: flex; flex-direction: column; }
.toolbar { height: 36px; flex: none; display: flex; align-items: center; }
.tool { width: 34px; height: 34px; flex: none; display: flex; align-items: center; justify-content: center; position: relative; }
.chev { width: 18px; flex: none; display: flex; justify-content: center; }
.sep { width: 2px; height: 26px; margin: 0 1px; flex: none; background: #ddd; }
.sketch { width: 86px; flex: none; display: flex; align-items: center; gap: 4px; padding-left: 8px; }
.var { font: italic 700 17px/20px "Liberation Serif", serif; }
.gearbadge { position: absolute; right: 2px; top: 2px; }
.search { height: 30px; margin-left: 11px; width: 146px; flex: none; display: flex; align-items: center; padding-left: 10px; background: #ededed; border-radius: 3px; }
.search input { width: 90px; }
.search input::placeholder { color: #444; opacity: 1; }
kbd { height: 18px; margin-right: 1px; padding: 0 3px; border: 1px solid #bbb; border-radius: 2px; font: 11px/16px Roboto, sans-serif; }

.main { flex: 1; min-height: 0; display: flex; }
.panel { width: 206px; flex: none; display: flex; flex-direction: column; border: 1px solid #d4d4d4; border-left: 0; }
.phead { height: 32px; display: flex; align-items: center; padding: 0 20px 0 4px; gap: 10px; flex: none; }
.phead h2 { flex: 1; }
.filter { display: flex; align-items: center; height: 30px; flex: none; padding: 0 8px 0 8px; }
.filter input { width: 158px; height: 30px; margin-left: auto; padding: 0 5px; border: 1px solid #c4c4c4; border-radius: 3px; box-shadow: inset 0 1px 1px #ddd; background: #fff; font-style: italic; }
.filter input::placeholder { color: #777; font-style: italic; opacity: 1; }
.scroller { display: flex; height: 563px; flex: none; border-bottom: 1px solid #ccc; margin-right: 5px; }
.listwrap { flex: 1; display: flex; flex-direction: column; }
.list { position: relative; padding-top: 4px; }
.list::before { content: ""; position: absolute; left: 10px; top: 3px; height: 103px; border-left: 1px solid #bbb; }
.list::after { content: ""; position: absolute; left: 5px; top: 106px; width: 10px; border-top: 1px solid #bbb; }
.list li { height: 24px; margin-bottom: 2px; display: flex; align-items: center; gap: 4px; padding: 1px 0 0 5px; }
.list .ic { width: 17px; height: 17px; }
.list .child { padding-left: 25px; }
.list .dim { color: #999; }
.list .dim .ic { opacity: .5; }
.list .linked { background: #eaeff4; border-bottom: 1px solid #8ccbf0; }
.list .active { background: #b1dcf4; font-weight: 700; }
.hbar { height: 4px; margin: auto 5px 0; background: #c1c1c1; }
.vbar { width: 17px; flex: none; display: flex; flex-direction: column; align-items: center; background: #f1f1f1; padding: 7px 0; }
.vbar i { border: 4px solid transparent; }
.up { border-top: 0 !important; border-bottom: 4px solid #444 !important; }
.down { border-bottom: 0 !important; border-top: 4px solid #444 !important; }
.thumb { width: 13px; height: 496px; margin: 26px 0 auto; background: #c1c1c1; }
.parts h3 { height: 27px; display: flex; align-items: center; gap: 7px; padding-left: 4px; font-size: 14px; }
.part { position: relative; height: 24px; margin-right: 5px; padding-left: 23px; line-height: 24px; background: #eaeff4; border-bottom: 1px solid #8ccbf0; }
.part::before { content: ""; position: absolute; left: 5px; bottom: -2px; width: 10px; border-bottom: 1px solid #bbb; }
.part::after { content: ""; position: absolute; left: 10px; top: 0; bottom: 0; border-left: 1px solid #bbb; }
h2 { font-size: 14px; }

.view { position: relative; flex: 1; min-width: 0; overflow: hidden; }
.scene { position: absolute; inset: 0; width: 100%; height: 100%; }
.dialog { position: absolute; left: -1px; top: 3px; width: 220px; height: 185px; background: #fff; box-shadow: 0 3px 10px rgba(0, 0, 0, .4); }
.dhead { height: 29px; display: flex; align-items: stretch; border-bottom: 1px solid #d4d4d4; padding-left: 6px; }
.dhead span { flex: 1; line-height: 28px; }
.dhead button { width: 28px; display: flex; align-items: center; justify-content: center; }
.ok { background: #009400; }
.entities { margin: 5px 3px 0; height: 44px; padding: 2px 6px; border: 1px solid #1651b0; border-radius: 2px; background: #d9eff8; }
.entities small { display: block; font-size: 10px; line-height: 18px; color: #60727b; }
.entities div { display: flex; justify-content: space-between; font-size: 13px; line-height: 22px; padding-right: 5px; }
.mode { display: flex; align-items: center; width: 194px; height: 31px; border-bottom: 1px solid #ddd; padding: 3px 6px 0; }
.mode select { flex: 1; appearance: none; }
.dist { display: flex; align-items: center; width: 194px; height: 26px; padding-left: 5px; font-size: 13px; }
.dist label { flex: 1; min-width: 0; color: #777; }
.dist input { width: 138px; flex: none; height: 24px; padding-right: 3px; border-bottom: 2px solid #1651b0; text-align: right; font-weight: 700; line-height: 20px; }
.dist input::selection { background: #3390ff; color: #fff; }
.tangent { display: flex; align-items: center; gap: 4px; height: 26px; padding-left: 4px; font-size: 13px; color: #777; }
.tangent input { width: 12px; height: 12px; accent-color: #1651b0; }
.dfoot { display: flex; align-items: center; justify-content: space-between; height: 28px; padding: 0 5px 0 7px; }
.dfoot .ic { width: 13px; height: 13px; opacity: .6; }
.dfoot input { width: 112px; height: 14px; appearance: none; }
.dfoot input::-webkit-slider-runnable-track { height: 2px; background: #777; }
.dfoot input::-webkit-slider-thumb { appearance: none; width: 12px; height: 12px; margin-top: -5px; border: 1px solid #666; border-radius: 50%; background: #fff; }
.flyout { position: absolute; left: -1px; top: 454px; width: 33px; height: 34px; display: flex; align-items: center; justify-content: center; background: #fff; border: 1px solid #ccc; border-left: 0; }
.cube { position: absolute; right: 0; top: 4px; }
.side { position: absolute; right: 0; top: 404px; width: 32px; display: flex; flex-direction: column; background: #fff; border: solid #ccc; border-width: 1px 0 0 1px; }
.side button { height: 33px; display: flex; align-items: center; justify-content: center; border-bottom: 1px solid #ccc; }

.tabs { height: 30px; flex: none; display: flex; gap: 2px; background: #cfcfcf; }
.plus { width: 37px; padding-right: 4px; display: flex; align-items: center; justify-content: center; }
.tab { width: 200px; height: 29px; display: flex; align-items: center; gap: 3px; padding-left: 10px; background: #e8e8e8; border-radius: 0 0 5px 5px; border-bottom: 3px solid #e8e8e8; color: #666; }
.tab.on { background: #fff; border-bottom-color: #1651b0; color: #333; }
</style>
